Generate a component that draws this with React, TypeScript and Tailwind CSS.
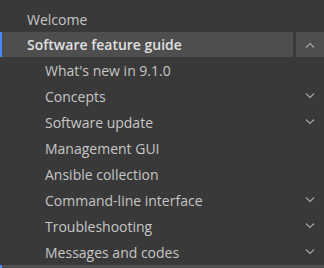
import React from "react";

const Chevron = ({ up = false }: { up?: boolean }) => (
  <svg width="10" height="6" viewBox="0 0 10 6" className="block">
    <path
      d={up ? "M1 5.5 L5 1.5 L9 5.5" : "M1 0.5 L5 4.5 L9 0.5"}
      fill="none"
      stroke="#a8a8a8"
      strokeWidth="1.1"
    />
  </svg>
);

const items: { label: string; chevron: boolean }[] = [
  { label: "What's new in 9.1.0", chevron: false },
  { label: "Concepts", chevron: true },
  { label: "Software update", chevron: true },
  { label: "Management GUI", chevron: false },
  { label: "Ansible collection", chevron: false },
  { label: "Command-line interface", chevron: true },
  { label: "Troubleshooting", chevron: true },
  { label: "Messages and codes", chevron: true },
];

export default function App() {
  return (
    <div
      className="w-[324px] h-[268px] bg-[#393939] overflow-hidden flex flex-col text-[14px]"
      style={{ fontFamily: "'Open Sans', 'Noto Sans', sans-serif" }}
    >
      <div className="h-[6px]" />
      <div className="h-[26px] flex items-center pl-[27px] text-[#c6c6c6]">Welcome</div>
      <div className="h-[25px] flex">
        <div className="flex-1 flex items-center bg-[#4e4e4e] border-l-2 border-[#4589ff] pl-[25px] font-semibold text-[#e0e0e0]">
          Software feature guide
        </div>
        <div className="w-[3px]" />
        <div className="w-[28px] bg-[#4e4e4e] flex items-center justify-center">
          <Chevron up />
        </div>
      </div>
      {items.map((it) => (
        <div key={it.label} className="h-[26px] flex items-center pl-[45px] pr-[9px] text-[#c6c6c6]">
          <span className="flex-1">{it.label}</span>
          {it.chevron && <Chevron />}
        </div>
      ))}
      <div className="h-[3px] bg-[#4e4e4e] border-l-2 border-[#4589ff]" />
    </div>
  );
}
